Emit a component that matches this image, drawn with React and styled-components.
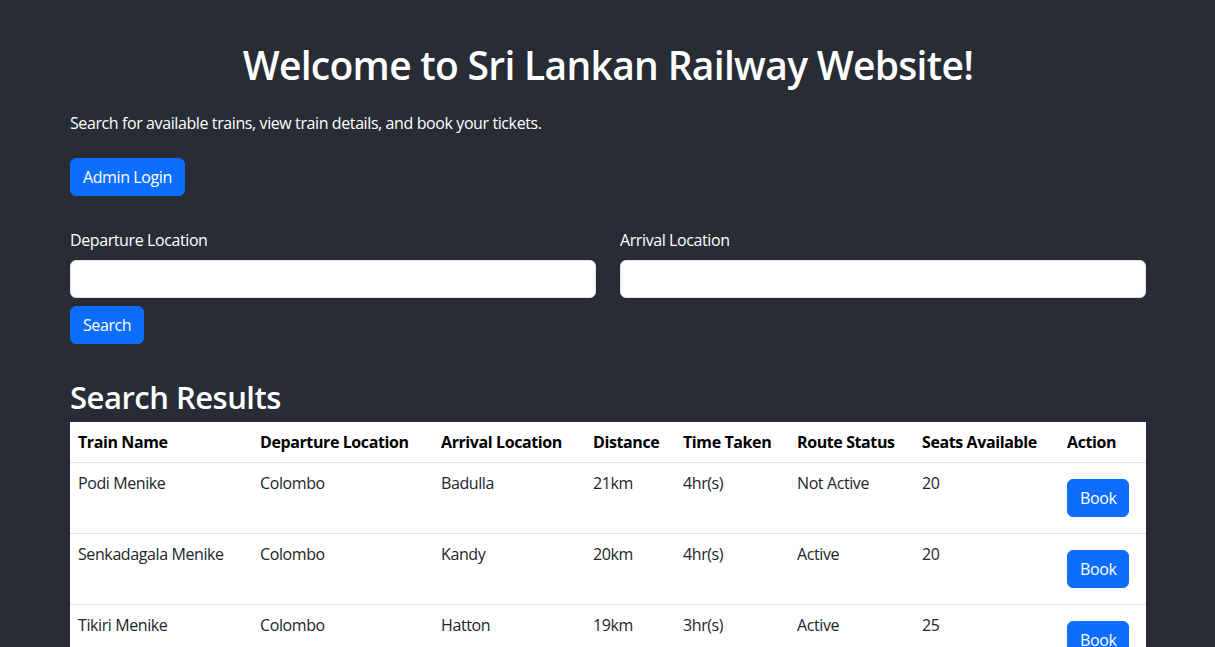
import React, { useState } from 'react'
import styled, { createGlobalStyle } from 'styled-components'

const GlobalStyle = createGlobalStyle`
  * { box-sizing: border-box; }
  body {
    margin: 0;
    background: #282c34;
    font-family: "Open Sans", "Noto Sans", "Liberation Sans", sans-serif;
    font-size: 16px;
    line-height: 1.5;
    letter-spacing: -0.4px;
    color: #fff;
  }
`

const Page = styled.div`
  min-height: 100vh;
  background: #282c34;
  padding: 41px 69px 40px 70px;
`

const Title = styled.h1`
  margin: 0 0 22px;
  text-align: center;
  font-size: 39px;
  font-weight: 600;
  line-height: 48px;
  letter-spacing: -0.7px;
  color: #fff;
`

const Lead = styled.p`
  margin: 0 0 23px;
  font-size: 16px;
`

const Btn = styled.button`
  display: inline-block;
  height: 38px;
  padding: 0 12px;
  border: 1px solid #0d6efd;
  border-radius: 6px;
  background: #0d6efd;
  color: #fff;
  font-family: inherit;
  font-size: 16px;
  letter-spacing: -0.4px;
  line-height: 36px;
  cursor: pointer;
  margin: ${p => p.$m || '0'};
`

const SearchForm = styled.form`
  margin-top: 32px;
`

const Fields = styled.div`
  display: grid;
  grid-template-columns: 1fr 1fr;
  gap: 24px;
`

const Field = styled.div`
  display: flex;
  flex-direction: column;
`

const Label = styled.label`
  margin-bottom: 8px;
  font-size: 16px;
  line-height: 24px;
`

const Input = styled.input`
  height: 38px;
  padding: 6px 12px;
  border: 1px solid #dee2e6;
  border-radius: 6px;
  background: #fff;
  font-size: 16px;
  font-family: inherit;
  outline: none;
`

const SubTitle = styled.h2`
  margin: 34px 0 6px;
  font-size: 31px;
  font-weight: 600;
  line-height: 38px;
  letter-spacing: -0.5px;
`

const Table = styled.table`
  width: 100%;
  table-layout: fixed;
  border-collapse: collapse;
  background: #fff;
  color: #000;
`

const Th = styled.th`
  padding: 8px;
  text-align: left;
  font-weight: 700;
  font-size: 16px;
  line-height: 24px;
  border-bottom: 1px solid #dee2e6;
  white-space: nowrap;
`

const Td = styled.td`
  padding: 8px;
  vertical-align: top;
  font-size: 16px;
  line-height: 24px;
  border-bottom: 1px solid #dee2e6;
  color: #212529;
`

const widths = [182, 181, 152, 90, 114, 125, 145, 87]
const heads = ['Train Name', 'Departure Location', 'Arrival Location', 'Distance', 'Time Taken', 'Route Status', 'Seats Available', 'Action']

const trains = [
  { name: 'Podi Menike', from: 'Colombo', to: 'Badulla', dist: '21km', time: '4hr(s)', status: 'Not Active', seats: 20 },
  { name: 'Senkadagala Menike', from: 'Colombo', to: 'Kandy', dist: '20km', time: '4hr(s)', status: 'Active', seats: 20 },
  { name: 'Tikiri Menike', from: 'Colombo', to: 'Hatton', dist: '19km', time: '3hr(s)', status: 'Active', seats: 25 },
]

export default function App() {
  const [from, setFrom] = useState('')
  const [to, setTo] = useState('')

  return (
    <>
      <GlobalStyle />
      <Page>
        <Title>Welcome to Sri Lankan Railway Website!</Title>
        <Lead>Search for available trains, view train details, and book your tickets.</Lead>
        <Btn>Admin Login</Btn>

        <SearchForm onSubmit={e => e.preventDefault()}>
          <Fields>
            <Field>
              <Label>Departure Location</Label>
              <Input value={from} onChange={e => setFrom(e.target.value)} />
            </Field>
            <Field>
              <Label>Arrival Location</Label>
              <Input value={to} onChange={e => setTo(e.target.value)} />
            </Field>
          </Fields>
          <Btn type="submit" $m="8px 0 0">Search</Btn>
        </SearchForm>

        <SubTitle>Search Results</SubTitle>
        <Table>
          <colgroup>
            {widths.map((w, i) => <col key={i} style={{ width: w }} />)}
          </colgroup>
          <thead>
            <tr>
              {heads.map(h => <Th key={h}>{h}</Th>)}
            </tr>
          </thead>
          <tbody>
            {trains.map(t => (
              <tr key={t.name}>
                <Td>{t.name}</Td>
                <Td>{t.from}</Td>
                <Td>{t.to}</Td>
                <Td>{t.dist}</Td>
                <Td>{t.time}</Td>
                <Td>{t.status}</Td>
                <Td>{t.seats}</Td>
                <Td><Btn $m="8px 0">Book</Btn></Td>
              </tr>
            ))}
          </tbody>
        </Table>
      </Page>
    </>
  )
}
